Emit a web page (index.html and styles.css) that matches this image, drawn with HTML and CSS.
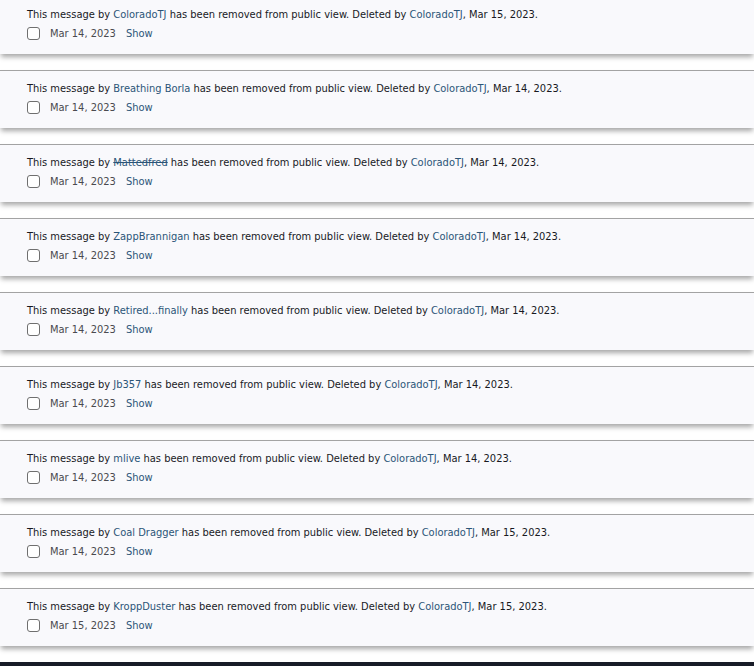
FILE: index.html
```html
<!DOCTYPE html>
<html lang="en">

<head>
    <meta charset="UTF-8">
    <meta name="viewport" content="width=device-width, initial-scale=1.0">
    <title>Deleted messages</title>
    <link rel="stylesheet" href="styles.css">
</head>

<body>
    <div class="msg_list">

        <div class="msg">
            <div class="msg_text">This message by <a class="user">ColoradoTJ</a> has been removed from public view. Deleted by <a class="user">ColoradoTJ</a>, <span class="when">Mar 15, 2023</span>.</div>
            <div class="msg_meta"><span class="check"></span><span class="date">Mar 14, 2023</span><a class="show">Show</a></div>
        </div>

        <div class="msg">
            <div class="msg_text">This message by <a class="user">Breathing Borla</a> has been removed from public view. Deleted by <a class="user">ColoradoTJ</a>, <span class="when">Mar 14, 2023</span>.</div>
            <div class="msg_meta"><span class="check"></span><span class="date">Mar 14, 2023</span><a class="show">Show</a></div>
        </div>

        <div class="msg">
            <div class="msg_text">This message by <a class="user banned">Mattedfred</a> has been removed from public view. Deleted by <a class="user">ColoradoTJ</a>, <span class="when">Mar 14, 2023</span>.</div>
            <div class="msg_meta"><span class="check"></span><span class="date">Mar 14, 2023</span><a class="show">Show</a></div>
        </div>

        <div class="msg">
            <div class="msg_text">This message by <a class="user">ZappBrannigan</a> has been removed from public view. Deleted by <a class="user">ColoradoTJ</a>, <span class="when">Mar 14, 2023</span>.</div>
            <div class="msg_meta"><span class="check"></span><span class="date">Mar 14, 2023</span><a class="show">Show</a></div>
        </div>

        <div class="msg">
            <div class="msg_text">This message by <a class="user">Retired...finally</a> has been removed from public view. Deleted by <a class="user">ColoradoTJ</a>, <span class="when">Mar 14, 2023</span>.</div>
            <div class="msg_meta"><span class="check"></span><span class="date">Mar 14, 2023</span><a class="show">Show</a></div>
        </div>

        <div class="msg">
            <div class="msg_text">This message by <a class="user">Jb357</a> has been removed from public view. Deleted by <a class="user">ColoradoTJ</a>, <span class="when">Mar 14, 2023</span>.</div>
            <div class="msg_meta"><span class="check"></span><span class="date">Mar 14, 2023</span><a class="show">Show</a></div>
        </div>

        <div class="msg">
            <div class="msg_text">This message by <a class="user">mlive</a> has been removed from public view. Deleted by <a class="user">ColoradoTJ</a>, <span class="when">Mar 14, 2023</span>.</div>
            <div class="msg_meta"><span class="check"></span><span class="date">Mar 14, 2023</span><a class="show">Show</a></div>
        </div>

        <div class="msg">
            <div class="msg_text">This message by <a class="user">Coal Dragger</a> has been removed from public view. Deleted by <a class="user">ColoradoTJ</a>, <span class="when">Mar 15, 2023</span>.</div>
            <div class="msg_meta"><span class="check"></span><span class="date">Mar 14, 2023</span><a class="show">Show</a></div>
        </div>

        <div class="msg">
            <div class="msg_text">This message by <a class="user">KroppDuster</a> has been removed from public view. Deleted by <a class="user">ColoradoTJ</a>, <span class="when">Mar 15, 2023</span>.</div>
            <div class="msg_meta"><span class="check"></span><span class="date">Mar 15, 2023</span><a class="show">Show</a></div>
        </div>

    </div>
    <div class="footer"></div>
</body>

</html>
```

FILE: styles.css
```css
body {
    margin: 0;
    background: #ffffff;
    font-family: "DejaVu Sans Condensed", "DejaVu Sans", sans-serif;
    font-size: 11px;
    color: #18191f;
}

.msg_list {
    margin-top: -4px;
}

.msg {
    background: #f9f9fc;
    border-top: 1px solid #a3a3a3;
    padding: 9px 27px 12px 27px;
    margin-bottom: 16px;
    box-shadow: 0 4px 5px -1px rgba(0, 0, 0, 0.35);
}

.msg_text {
    line-height: 18px;
    white-space: nowrap;
}

.user {
    color: #2b5578;
    text-decoration: none;
}

.banned {
    text-decoration: line-through;
}

.msg_meta {
    display: flex;
    align-items: center;
    height: 18px;
}

.check {
    width: 11px;
    height: 11px;
    border: 1px solid #6f6f6f;
    border-radius: 3px;
    background: #ffffff;
    margin-right: 10px;
}

.date {
    color: #4a4a4f;
    margin-right: 10px;
}

.show {
    color: #2b5578;
}

.footer {
    margin-top: 2px;
    height: 10px;
    background: #181c27;
}
```
